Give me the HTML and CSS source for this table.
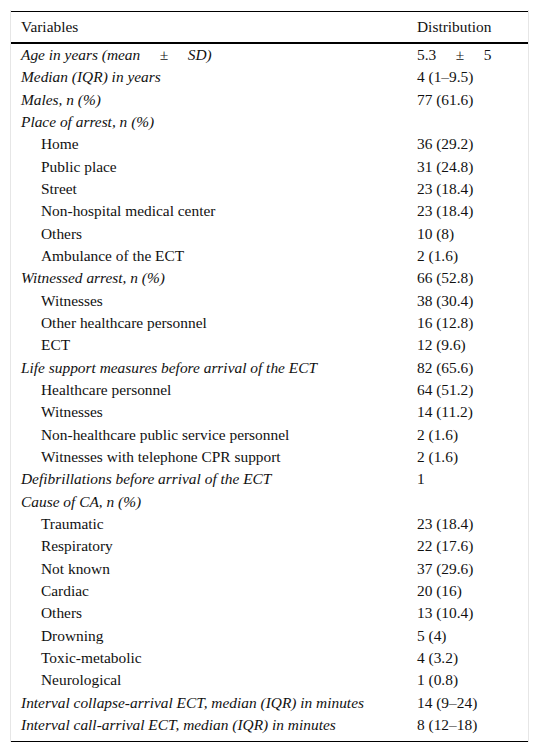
FILE: index.html
```html
<!DOCTYPE html>
<html>
<head>
<meta charset="utf-8">
<link rel="stylesheet" href="styles.css">
</head>
<body>
<div class="frame">
<table class="data">
<thead>
<tr><th class="c1">Variables</th><th class="c2">Distribution</th></tr>
</thead>
<tbody>
<tr><td class="c1 it">Age in years (mean<span class="pm">±</span>SD)</td><td class="c2">5.3<span class="pm">±</span>5</td></tr>
<tr><td class="c1 it">Median (IQR) in years</td><td class="c2">4 (1–9.5)</td></tr>
<tr><td class="c1 it">Males, n (%)</td><td class="c2">77 (61.6)</td></tr>
<tr><td class="c1 it">Place of arrest, n (%)</td><td class="c2"></td></tr>
<tr><td class="c1 sub">Home</td><td class="c2">36 (29.2)</td></tr>
<tr><td class="c1 sub">Public place</td><td class="c2">31 (24.8)</td></tr>
<tr><td class="c1 sub">Street</td><td class="c2">23 (18.4)</td></tr>
<tr><td class="c1 sub">Non-hospital medical center</td><td class="c2">23 (18.4)</td></tr>
<tr><td class="c1 sub">Others</td><td class="c2">10 (8)</td></tr>
<tr><td class="c1 sub">Ambulance of the ECT</td><td class="c2">2 (1.6)</td></tr>
<tr><td class="c1 it">Witnessed arrest, n (%)</td><td class="c2">66 (52.8)</td></tr>
<tr><td class="c1 sub">Witnesses</td><td class="c2">38 (30.4)</td></tr>
<tr><td class="c1 sub">Other healthcare personnel</td><td class="c2">16 (12.8)</td></tr>
<tr><td class="c1 sub">ECT</td><td class="c2">12 (9.6)</td></tr>
<tr><td class="c1 it">Life support measures before arrival of the ECT</td><td class="c2">82 (65.6)</td></tr>
<tr><td class="c1 sub">Healthcare personnel</td><td class="c2">64 (51.2)</td></tr>
<tr><td class="c1 sub">Witnesses</td><td class="c2">14 (11.2)</td></tr>
<tr><td class="c1 sub">Non-healthcare public service personnel</td><td class="c2">2 (1.6)</td></tr>
<tr><td class="c1 sub">Witnesses with telephone CPR support</td><td class="c2">2 (1.6)</td></tr>
<tr><td class="c1 it">Defibrillations before arrival of the ECT</td><td class="c2">1</td></tr>
<tr><td class="c1 it">Cause of CA, n (%)</td><td class="c2"></td></tr>
<tr><td class="c1 sub">Traumatic</td><td class="c2">23 (18.4)</td></tr>
<tr><td class="c1 sub">Respiratory</td><td class="c2">22 (17.6)</td></tr>
<tr><td class="c1 sub">Not known</td><td class="c2">37 (29.6)</td></tr>
<tr><td class="c1 sub">Cardiac</td><td class="c2">20 (16)</td></tr>
<tr><td class="c1 sub">Others</td><td class="c2">13 (10.4)</td></tr>
<tr><td class="c1 sub">Drowning</td><td class="c2">5 (4)</td></tr>
<tr><td class="c1 sub">Toxic-metabolic</td><td class="c2">4 (3.2)</td></tr>
<tr><td class="c1 sub">Neurological</td><td class="c2">1 (0.8)</td></tr>
<tr><td class="c1 it">Interval collapse-arrival ECT, median (IQR) in minutes</td><td class="c2">14 (9–24)</td></tr>
<tr class="last"><td class="c1 it">Interval call-arrival ECT, median (IQR) in minutes</td><td class="c2">8 (12–18)</td></tr>
</tbody>
</table>
</div>
</body>
</html>
```
FILE: styles.css
```css
html, body {
  margin: 0;
  padding: 0;
  background: #ffffff;
}

body {
  font-family: "Liberation Serif", "Times New Roman", serif;
  font-size: 15.4px;
  color: #111111;
}

.frame {
  margin: 10px 10px 0 10px;
  width: 517px;
  padding-top: 1px;
  border-left: 1px solid #e6e6e6;
  border-right: 1px solid #e6e6e6;
}

.data {
  width: 517px;
  border-collapse: collapse;
  table-layout: fixed;
}

.data th {
  font-weight: normal;
  text-align: left;
  height: 30px;
  padding: 0;
  border-top: 1px solid #000;
  border-bottom: 2px solid #000;
  vertical-align: middle;
}

.data td {
  height: 22.33px;
  padding: 0;
  vertical-align: middle;
  white-space: nowrap;
}

.c1 {
  width: 386px;
  padding-left: 10px !important;
}

.c2 {
  padding-left: 10px !important;
}

.it {
  font-style: italic;
}

.sub {
  padding-left: 30px !important;
}

.pm {
  display: inline-block;
  margin: 0 19.5px;
}

.last td {
  padding-bottom: 5px;
  border-bottom: 1px solid #000;
}
```
